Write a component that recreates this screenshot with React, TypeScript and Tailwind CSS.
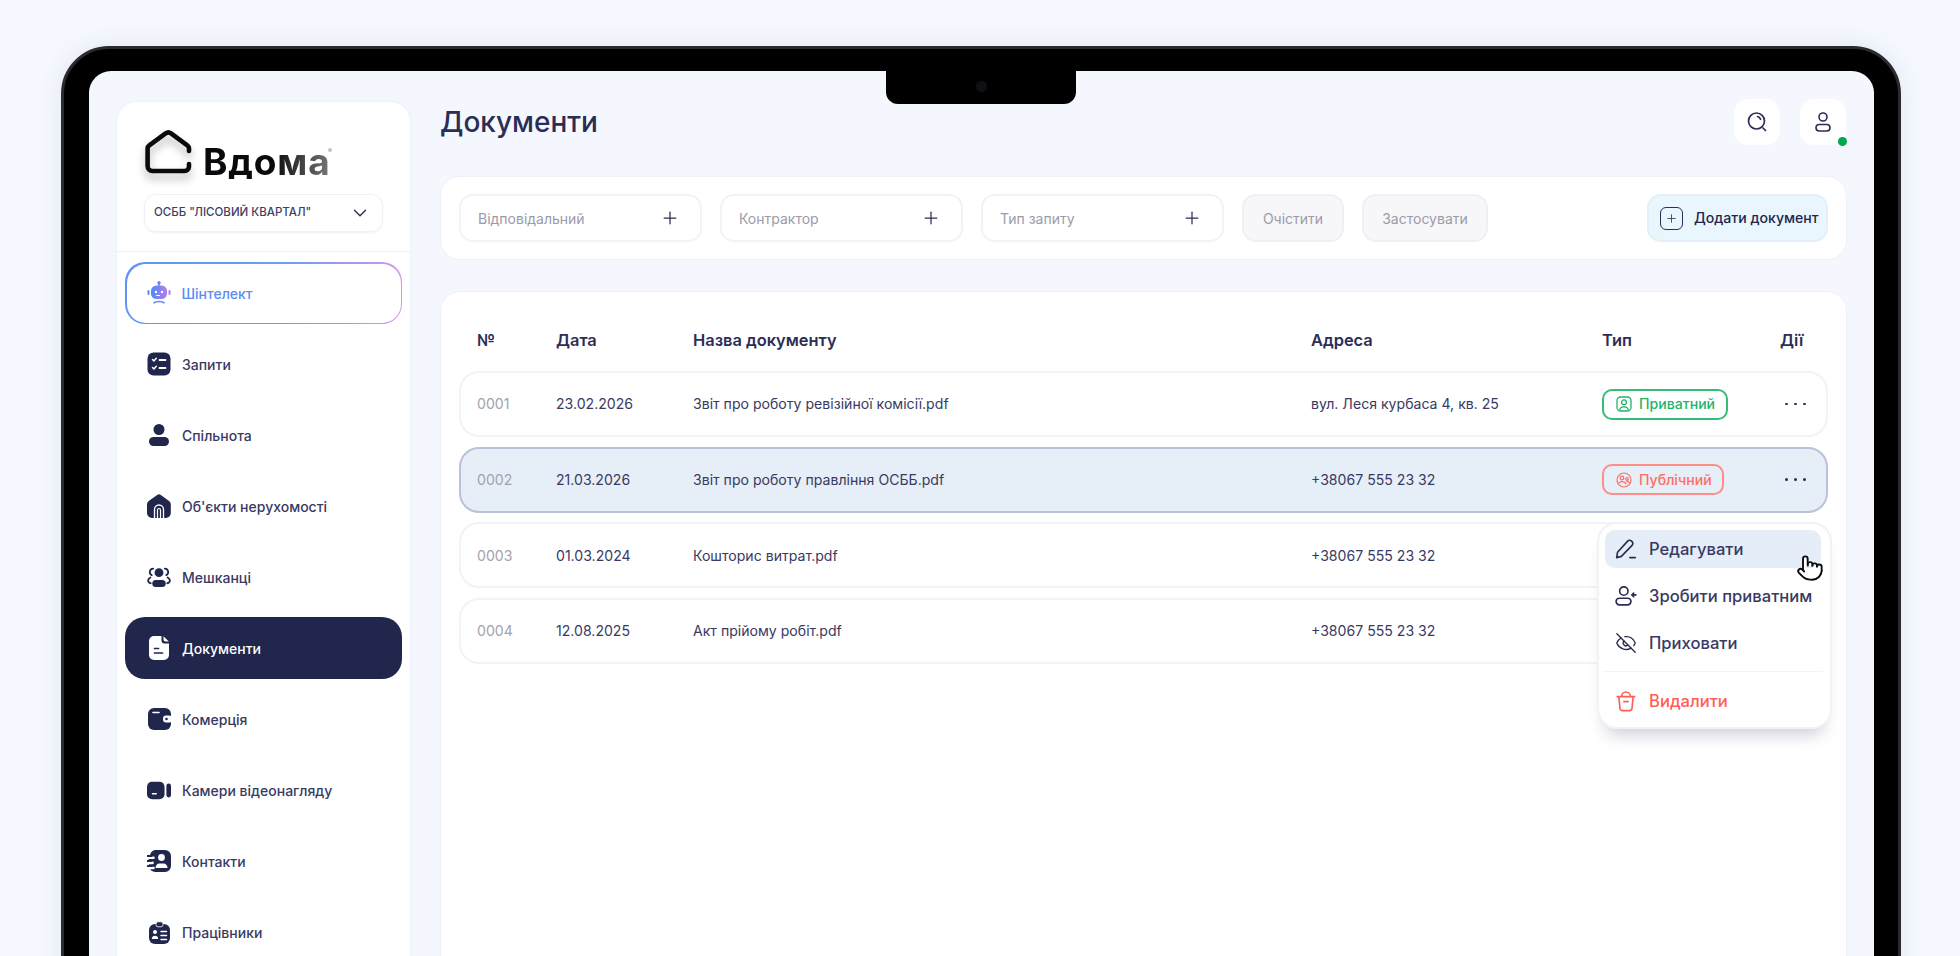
import React from "react";
import { EyeOff, Pointer, Plus, ChevronDown } from "lucide-react";

const N = "#20264c";

const IconRequests = () => (
  <svg width="24" height="24" viewBox="0 0 24 24">
    <rect x="0.5" y="0.5" width="23" height="23" rx="6" fill={N} />
    <path d="M5.5 7.5l1.4 1.4 2.4-2.6M5.5 15.5l1.4 1.4 2.4-2.6" stroke="#fff" strokeWidth="1.5" fill="none" strokeLinecap="round" strokeLinejoin="round" />
    <path d="M12.5 8h6M12.5 16h6" stroke="#fff" strokeWidth="1.8" strokeLinecap="round" />
  </svg>
);
const IconPerson = () => (
  <svg width="24" height="24" viewBox="0 0 24 24" fill={N}>
    <circle cx="12" cy="6.5" r="5.5" />
    <rect x="2" y="14" width="20" height="9" rx="4.5" />
  </svg>
);
const IconHouse = () => (
  <svg width="24" height="24" viewBox="0 0 24 24">
    <path d="M10.2 0.9a3 3 0 0 1 3.6 0l8.3 6a4 4 0 0 1 1.7 3.3V19a5 5 0 0 1-5 5H5a5 5 0 0 1-5-5v-8.8a4 4 0 0 1 1.7-3.3z" fill={N} />
    <path d="M7.5 24v-8.5a4.5 4.5 0 0 1 9 0V24" fill="none" stroke="#fff" strokeWidth="1.3" />
    <path d="M10.5 24v-8a1.5 1.5 0 0 1 3 0v8" fill="none" stroke="#fff" strokeWidth="1.2" />
  </svg>
);
const IconGroup = () => (
  <svg width="25" height="21" viewBox="0 0 25 21" fill={N}>
    <circle cx="12.5" cy="5.5" r="4.6" />
    <rect x="5.5" y="13" width="14" height="7.5" rx="3.7" />
    <path d="M6.5 1.2a3.6 3.6 0 0 0-1.6 6.8" fill="none" stroke={N} strokeWidth="1.9" strokeLinecap="round" />
    <path d="M18.5 1.2a3.6 3.6 0 0 1 1.6 6.8" fill="none" stroke={N} strokeWidth="1.9" strokeLinecap="round" />
    <path d="M3.5 10.5C1.6 11.6 .8 13.5 1.6 15c.4.8 1.2 1.3 2.2 1.5" fill="none" stroke={N} strokeWidth="1.9" strokeLinecap="round" />
    <path d="M21.5 10.5c1.9 1.1 2.7 3 1.9 4.5-.4.8-1.2 1.3-2.2 1.5" fill="none" stroke={N} strokeWidth="1.9" strokeLinecap="round" />
  </svg>
);
const IconDoc = () => (
  <svg width="20" height="24" viewBox="0 0 20 24">
    <path d="M5 0h7.500v4.500a3 3 0 0 0 3 3H20V19a5 5 0 0 1-5 5H5a5 5 0 0 1-5-5V5a5 5 0 0 1 5-5z" fill="#fff" />
    <path d="M14.500 .3 19.800 5.600h-3.300a2 2 0 0 1-2-2z" fill="#fff" />
    <path d="M5.500 12.500h4M5.500 17h8" stroke={N} strokeWidth="1.700" strokeLinecap="round" />
  </svg>
);
const IconWallet = () => (
  <svg width="23" height="22" viewBox="0 0 23 22">
    <rect x="0" y="0" width="23" height="22" rx="6" fill={N} />
    <path d="M5 4.500h6" stroke="#fff" strokeWidth="1.600" strokeLinecap="round" />
    <rect x="15" y="7.500" width="9" height="7" rx="3" fill="#fff" />
    <circle cx="18.500" cy="11" r="1.300" fill={N} />
  </svg>
);
const IconCamera = () => (
  <svg width="26" height="19" viewBox="0 0 26 19">
    <rect x="0" y="0" width="19" height="19" rx="5.500" fill={N} />
    <rect x="21" y="2" width="5" height="15" rx="2.500" fill={N} />
    <path d="M6 13h4" stroke="#fff" strokeWidth="1.700" strokeLinecap="round" />
  </svg>
);
const IconContact = () => (
  <svg width="24" height="22" viewBox="0 0 24 22">
    <path d="M8 0h10a6 6 0 0 1 6 6v10a6 6 0 0 1-6 6H8a6 6 0 0 1-5-2.700h3.500a1.300 1.300 0 0 0 0-2.600H1.500l.5-2.500h3.500a1.300 1.300 0 0 0 0-2.600H2l-.5-2.600h5a1.300 1.300 0 0 0 0-2.600H3A6 6 0 0 1 8 0z" fill={N} />
    <path d="M.5 6h4M0 11h4M.5 16h4" stroke={N} strokeWidth="1.800" strokeLinecap="round" />
    <circle cx="14.500" cy="7.500" r="3.400" fill="#fff" />
    <path d="M8.500 18c0-3 2-4.600 3.800-4.600h4.400c1.800 0 3.800 1.600 3.800 4.600z" fill="#fff" />
  </svg>
);
const IconBadge = () => (
  <svg width="21" height="23" viewBox="0 0 21 23">
    <rect x="0" y="3" width="21" height="20" rx="6" fill={N} />
    <rect x="7" y="0.800" width="7" height="5" rx="2" fill={N} stroke="#fff" strokeWidth="0.800" />
    <circle cx="6" cy="11" r="2" fill="#fff" />
    <path d="M2.800 18c0-2 1.400-3.200 3.200-3.200S9.200 16 9.200 18z" fill="#fff" />
    <path d="M12 10.500h5.500M12 14.500h5.500M12 18.500h5.500" stroke="#fff" strokeWidth="1.500" strokeLinecap="round" />
  </svg>
);
const IconRobot = () => (
  <svg width="24" height="24" viewBox="0 0 24 24">
    <defs>
      <linearGradient id="rb" x1="0" y1="0" x2="1" y2="0">
        <stop offset="0" stopColor="#4f8bf5" />
        <stop offset="1" stopColor="#b57af0" />
      </linearGradient>
    </defs>
    <circle cx="12" cy="1.800" r="1.700" fill="#5b8cf5" />
    <rect x="11.200" y="2" width="1.600" height="3" fill="#5b8cf5" />
    <rect x="4" y="4.500" width="16" height="13.500" rx="5.500" fill="url(#rb)" />
    <rect x="0.500" y="9" width="2" height="5" rx="1" fill="#5b8cf5" />
    <rect x="21.500" y="9" width="2" height="5" rx="1" fill="#b57af0" />
    <circle cx="9" cy="11" r="1.200" fill="#fff" />
    <circle cx="15" cy="11" r="1.200" fill="#fff" />
    <path d="M9.500 14.500h3" stroke="#fff" strokeWidth="1.200" strokeLinecap="round" />
    <path d="M7 21.800c3-1.600 7-1.600 10 0" stroke="#6c8cf2" strokeWidth="1.600" fill="none" strokeLinecap="round" />
  </svg>
);

const IconPrivate = () => (
  <svg width="16" height="16" viewBox="0 0 16 16" fill="none" stroke="#22b567" strokeWidth="1.300">
    <rect x="1" y="1" width="14" height="14" rx="3.500" />
    <circle cx="8" cy="6.300" r="2.400" />
    <path d="M3.500 14.500c.3-2.600 2-3.700 4.500-3.700s4.200 1.100 4.500 3.700" />
  </svg>
);
const IconPublic = () => (
  <svg width="16" height="16" viewBox="0 0 16 16" fill="none" stroke="#ff6d66" strokeWidth="1.200">
    <circle cx="8" cy="8" r="7" />
    <circle cx="6" cy="6" r="1.800" />
    <circle cx="11" cy="7" r="1.300" />
    <path d="M3 11c.6-1.500 4.800-2 6.500 0 .3.400.4.900.4 1.500M10.500 9.700c1-.2 2.200.1 2.800.9" />
  </svg>
);

const nav = [
  ["Запити", IconRequests],
  ["Спільнота", IconPerson],
  ["Об'єкти нерухомості", IconHouse],
  ["Мешканці", IconGroup],
  ["Документи", IconDoc],
  ["Комерція", IconWallet],
  ["Камери відеонагляду", IconCamera],
  ["Контакти", IconContact],
  ["Працівники", IconBadge],
] as const;

const rows = [
  { n: "0001", d: "23.02.2026", t: "Звіт про роботу ревізійної комісії.pdf", a: "вул. Леся курбаса 4, кв. 25", type: "priv" },
  { n: "0002", d: "21.03.2026", t: "Звіт про роботу правління ОСББ.pdf", a: "+38067 555 23 32", type: "pub", active: true },
  { n: "0003", d: "01.03.2024", t: "Кошторис витрат.pdf", a: "+38067 555 23 32" },
  { n: "0004", d: "12.08.2025", t: "Акт прійому робіт.pdf", a: "+38067 555 23 32" },
];

function Dots() {
  return (
    <span className="flex gap-[6.500px] ml-[5px]">
      <i className="w-[2.500px] h-[2.500px] rounded-full bg-[#2b2d52]" />
      <i className="w-[2.500px] h-[2.500px] rounded-full bg-[#2b2d52]" />
      <i className="w-[2.500px] h-[2.500px] rounded-full bg-[#2b2d52]" />
    </span>
  );
}

function Filter({ label }: { label: string }) {
  return (
    <div className="w-[243px] h-[48px] rounded-[14px] border-2 border-[#f2f3f9] flex items-center justify-between pl-[17px] pr-[20px] text-[14px] text-[#9b9ba9]">
      <span>{label}</span>
      <Plus size={20} strokeWidth={1.500} color="#2b2d52" />
    </div>
  );
}

export default function App() {
  return (
    <div className="w-[1960px] h-[956px] overflow-hidden bg-[#f5f8ff] pt-[46px] pl-[61px] pr-[59px] font-['Inter',sans-serif] text-[#383a63]">
      <div className="relative h-[1000px] rounded-t-[48px] border-[3px] border-[#2b2b2f] bg-black pt-[22px] pl-[25px] pr-[24px] shadow-[0_0_24px_rgba(60,70,110,0.10)]">
        {/* notch */}
        <div className="absolute left-[822px] top-[20px] w-[190px] h-[35px] rounded-b-[12px] bg-black flex items-center justify-center">
          <span className="w-[11px] h-[11px] rounded-full bg-[#101014]" />
        </div>

        <div className="h-full rounded-t-[22px] bg-[#f4f7fe] flex pl-[28px] pr-[27px] pt-[31px] gap-[30px]">
          {/* sidebar */}
          <aside className="w-[293px] shrink-0 h-full rounded-t-[20px] bg-white shadow-[0_0_3px_rgba(200,205,230,0.25)]">
            <div className="px-[28px] pt-[27px] h-[150px] border-b border-[#eeeef5]">
              <div className="flex items-end gap-[11px] h-[45px]">
                <svg width="47" height="44" viewBox="0 0 47 44" fill="none" className="drop-shadow-[0_6px_4px_rgba(0,0,0,0.28)]">
                  <path d="M44 21V18.500a4 4 0 0 0-1.700-3.200L26 3.400a4.500 4.500 0 0 0-5.400 0L4.300 15.300A4 4 0 0 0 2.600 18.500V36a5 5 0 0 0 5 5H39.500a4.500 4.500 0 0 0 4.500-4.500V34" stroke="#0a0a0c" strokeWidth="4.600" strokeLinecap="round" strokeLinejoin="round" />
                </svg>
                <span className="text-[37px] leading-[34px] -mb-[5px] font-bold tracking-[0.800px] bg-[linear-gradient(90deg,#0a0a0c_55%,#777_100%)] bg-clip-text text-transparent">
                  Вдома
                </span>
                <span className="w-[4px] h-[4px] -ml-[13px] mb-[22px] rounded-full bg-[#c4c4c8]" />
              </div>
              <div className="mt-[20px] -ml-[1px] h-[38px] w-[239px] rounded-[12px] border border-[#f0f0f6] shadow-[0_1px_2px_rgba(200,200,220,0.25)] flex items-center justify-between pl-[9px] pr-[11px] text-[11.500px] font-medium text-[#3d3f68]">
                <span>ОСББ "ЛІСОВИЙ КВАРТАЛ"</span>
                <ChevronDown size={22} strokeWidth={1.500} color="#2b2d52" />
              </div>
            </div>

            <nav className="px-[8px] pt-[10px] flex flex-col gap-[9px]">
              <div className="h-[62px] rounded-[20px] p-[1.500px] bg-[linear-gradient(90deg,#5f93fb_0%,#6f9cf6_60%,#d794e8_100%)]">
                <div className="h-full rounded-[19px] bg-white flex items-center pl-[20px] gap-[11px] text-[14px] font-medium text-[#5b8df2]">
                  <IconRobot />
                  <span>Шінтелект</span>
                </div>
              </div>
              {nav.map(([label, Icon]) => {
                const active = label === "Документи";
                return (
                  <div
                    key={label}
                    className={
                      active
                        ? "h-[62px] rounded-[20px] bg-[#20264c] text-white flex items-center pl-[22px] text-[14px] font-medium"
                        : "h-[62px] rounded-[20px] flex items-center pl-[22px] text-[14px] font-medium"
                    }
                  >
                    <span className="w-[24px] flex justify-center">
                      <Icon />
                    </span>
                    <span className="ml-[11px]">{label}</span>
                  </div>
                );
              })}
            </nav>
          </aside>

          {/* main */}
          <main className="flex-1 min-w-0">
            <div className="h-[43px] flex items-start justify-between">
              <h1 className="text-[28px] leading-[40px] font-medium text-[#2b2d55]">Документи</h1>
              <div className="flex gap-[20px] -mt-[3px] pr-[1px]">
                <div className="w-[46px] h-[46px] rounded-[14px] bg-white flex items-center justify-center">
                  <svg width="22" height="22" viewBox="0 0 22 22" fill="none" stroke="#2b2d52" strokeWidth="1.700" strokeLinecap="round">
                    <circle cx="10.500" cy="10" r="8" />
                    <path d="M17 17l2.500 2.500M11.500 5.500c1.500.3 2.500 1.300 3 2.800" />
                  </svg>
                </div>
                <div className="relative w-[46px] h-[46px] rounded-[14px] bg-white flex items-center justify-center">
                  <svg width="20" height="22" viewBox="0 0 20 22" fill="none" stroke="#2b2d52" strokeWidth="1.600">
                    <circle cx="10" cy="6" r="4" />
                    <rect x="3" y="13.500" width="14" height="6.500" rx="3.200" />
                  </svg>
                  <span className="absolute right-[-1px] bottom-[-1px] w-[9px] h-[9px] rounded-full bg-[#00a84f]" />
                </div>
              </div>
            </div>

            <section className="mt-[31px] h-[84px] rounded-[20px] bg-white border border-[#f0f1f8] flex items-center pl-[18px] pr-[18px] gap-[18px]">
              <Filter label="Відповідальний" />
              <Filter label="Контрактор" />
              <Filter label="Тип запиту" />
              <div className="w-[102px] h-[48px] rounded-[14px] bg-[#f7f6f9] border-2 border-[#efeff5] flex items-center justify-center text-[14px] text-[#9b9ba9]">Очістити</div>
              <div className="w-[126px] h-[48px] rounded-[14px] bg-[#f7f6f9] border-2 border-[#efeff5] flex items-center justify-center text-[14px] text-[#9b9ba9]">Застосувати</div>
              <div className="ml-auto w-[181px] h-[48px] rounded-[14px] bg-[#e9f6fd] border-2 border-[#e4eff9] flex items-center pl-[11px] gap-[11px] text-[14.100px] font-medium text-[#20264c] whitespace-nowrap">
                <span className="w-[23px] h-[23px] rounded-[6px] border-[1.500px] border-[#2b2d52] flex items-center justify-center">
                  <Plus size={13} strokeWidth={1.500} color="#2b2d52" />
                </span>
                Додати документ
              </div>
            </section>

            <section className="relative mt-[31px] h-[700px] rounded-t-[20px] bg-white border border-[#f0f1f8] px-[18px]">
              <div className="grid grid-cols-[79px_137px_618px_291px_178px_1fr] h-[79px] items-center pl-[18px] pt-[18px] text-[16.400px] font-semibold text-[#2b2d55]">
                <span>№</span>
                <span>Дата</span>
                <span>Назва документу</span>
                <span>Адреса</span>
                <span>Тип</span>
                <span>Дії</span>
              </div>
              <div className="flex flex-col gap-[9.700px]">
                {rows.map((r) => (
                  <div
                    key={r.n}
                    className={
                      r.active
                        ? "relative h-[66px] rounded-[20px] border-2 border-[#b9c3d5] bg-[#e6eef8] grid grid-cols-[79px_137px_618px_291px_178px_1fr] items-center pl-[16px] text-[14.100px]"
                        : "relative h-[66px] rounded-[20px] border-2 border-[#f2f2f7] bg-white grid grid-cols-[79px_137px_618px_291px_178px_1fr] items-center pl-[16px] text-[14.100px]"
                    }
                  >
                    <span className="text-[#a3a3ad]">{r.n}</span>
                    <span>{r.d}</span>
                    <span>{r.t}</span>
                    <span>{r.a}</span>
                    <span>
                      {r.type === "priv" && (
                        <span className="inline-flex items-center gap-[7px] w-[126px] h-[31px] rounded-[10px] border-2 border-[#35bd75] pl-[12px] text-[#22b567] font-medium">
                          <IconPrivate />
                          Приватний
                        </span>
                      )}
                      {r.type === "pub" && (
                        <span className="inline-flex items-center gap-[7px] w-[122px] h-[31px] rounded-[10px] border-2 border-[#ff8d87] pl-[12px] text-[#ff6d66] font-medium">
                          <IconPublic />
                          Публічний
                        </span>
                      )}
                    </span>
                    <span>{r.type && <Dots />}</span>
                  </div>
                ))}
              </div>

              {/* context menu */}
              <div className="absolute left-[1156px] top-[230px] w-[235px] h-[207px] rounded-[20px] bg-white border-2 border-[#f1f1f6] shadow-[0_14px_16px_-8px_rgba(40,45,90,0.22)] pl-[6px] pr-[9px] pt-[6px] text-[16.600px] font-medium text-[#383a63]">
                <div className="h-[38px] rounded-[10px] bg-[#e4edf8] flex items-center pl-[10px] gap-[12px]">
                  <svg width="22" height="22" viewBox="0 0 20 20" fill="none" stroke="#2b2d52" strokeWidth="1.500" strokeLinejoin="round" strokeLinecap="round">
                    <path d="M1.500 17.800l.8-4.800L11.500 2.800a2.400 2.400 0 0 1 3.400-.1l.6.6a2.400 2.400 0 0 1 0 3.400L5.800 16.700z" />
                    <path d="M13.500 17.800h5" />
                  </svg>
                  Редагувати
                </div>
                <div className="h-[38px] mt-[9px] flex items-center pl-[10px] gap-[12px]">
                  <svg width="22" height="22" viewBox="0 0 20 20" fill="none" stroke="#2b2d52" strokeWidth="1.500" strokeLinecap="round" strokeLinejoin="round">
                    <circle cx="8" cy="5.500" r="3.800" />
                    <rect x="1" y="12" width="13.500" height="6" rx="3" />
                    <path d="M19 9h-3.500M17 7.300 15.300 9l1.700 1.700" />
                  </svg>
                  Зробити приватним
                </div>
                <div className="h-[38px] mt-[9px] flex items-center pl-[10px] gap-[12px]">
                  <EyeOff size={22} strokeWidth={1.500} color="#2b2d52" />
                  Приховати
                </div>
                <div className="mt-[9px] border-t border-[#f3f3f8] -mx-[2px]" />
                <div className="h-[38px] mt-[10px] flex items-center pl-[10px] gap-[12px] text-[#ff5f55]">
                  <svg width="22" height="22" viewBox="0 0 20 20" fill="none" stroke="#ff5f55" strokeWidth="1.500" strokeLinecap="round" strokeLinejoin="round">
                    <path d="M2 6h16M3.500 6l1 10.500a2.500 2.500 0 0 0 2.500 2.200h6a2.500 2.500 0 0 0 2.500-2.200L16.500 6" />
                    <path d="M6 5.800a4 4 0 0 1 8 0" />
                    <path d="M8 10.500h4" />
                  </svg>
                  Видалити
                </div>
                <span className="absolute left-[197px] top-[30px]">
                  <Pointer size={28} strokeWidth={1.600} color="#0c0c10" fill="#ffffff" />
                </span>
              </div>
            </section>
          </main>
        </div>
      </div>
    </div>
  );
}
